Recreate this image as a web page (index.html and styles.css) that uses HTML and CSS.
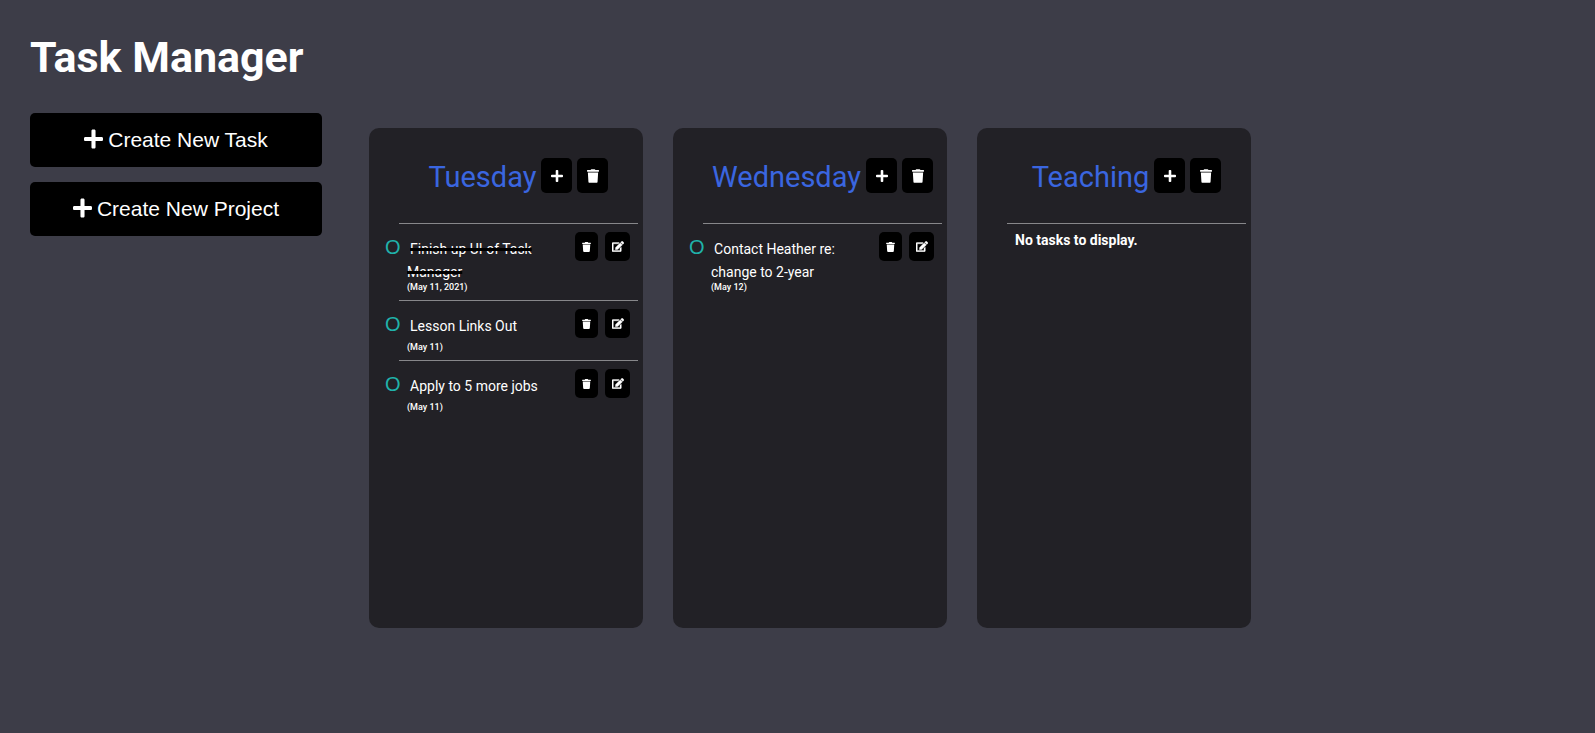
FILE: index.html
```html
<!DOCTYPE html>
<html lang="en">
<head>
<meta charset="utf-8">
<title>Task Manager</title>
<link rel="stylesheet" href="styles.css">
</head>
<body>
<svg class="sprite" aria-hidden="true">
  <symbol id="plus" viewBox="0 0 448 512"><path d="M416 208H272V64c0-17.670-14.330-32-32-32h-32c-17.670 0-32 14.330-32 32v144H32c-17.670 0-32 14.330-32 32v32c0 17.670 14.330 32 32 32h144v144c0 17.670 14.330 32 32 32h32c17.670 0 32-14.330 32-32V304h144c17.670 0 32-14.330 32-32v-32c0-17.670-14.330-32-32-32z"/></symbol>
  <symbol id="trash" viewBox="0 0 448 512"><path d="M432 32H312l-9.400-18.700A24 24 0 0 0 281.100 0H166.800a23.720 23.720 0 0 0-21.400 13.300L136 32H16A16 16 0 0 0 0 48v32a16 16 0 0 0 16 16h416a16 16 0 0 0 16-16V48a16 16 0 0 0-16-16zM53.200 467a48 48 0 0 0 47.900 45h245.800a48 48 0 0 0 47.900-45L416 128H32z"/></symbol>
  <symbol id="edit" viewBox="0 0 576 512"><path d="M402.600 83.200l90.200 90.200c3.800 3.800 3.800 10 0 13.800L274.400 405.600l-92.800 10.300c-12.400 1.400-22.900-9.100-21.500-21.500l10.300-92.800L388.800 83.200c3.800-3.800 10-3.800 13.800 0zm162-22.900l-48.800-48.800c-15.200-15.200-39.900-15.200-55.200 0l-35.400 35.400c-3.800 3.800-3.800 10 0 13.800l90.200 90.200c3.800 3.800 10 3.800 13.800 0l35.400-35.400c15.200-15.300 15.200-40 0-55.200zM384 346.200V448H64V128h229.800c3.200 0 6.200-1.300 8.500-3.500l40-40c7.600-7.600 2.200-20.500-8.500-20.500H48C21.500 64 0 85.500 0 112v352c0 26.500 21.500 48 48 48h352c26.500 0 48-21.500 48-48V306.200c0-10.700-12.900-16-20.500-8.500l-40 40c-2.200 2.300-3.500 5.300-3.500 8.500z"/></symbol>
</svg>
<div class="app">
  <aside class="sidebar">
    <h1 class="app-title">Task Manager</h1>
    <button class="create" type="button"><svg class="icon-lg"><use href="#plus"/></svg>Create New Task</button>
    <button class="create" type="button"><svg class="icon-lg"><use href="#plus"/></svg>Create New Project</button>
  </aside>
  <main class="projects">
    <section class="project">
      <header class="project-header">
        <h2 class="project-title">Tuesday</h2>
        <button class="project-btn" type="button" aria-label="Add task"><svg class="icon"><use href="#plus"/></svg></button>
        <button class="project-btn" type="button" aria-label="Delete project"><svg class="icon"><use href="#trash"/></svg></button>
      </header>
      <ul class="tasks">
        <li class="task">
          <div class="task-body">
            <button class="bullet" type="button">O</button> <span class="done">Finish up UI of Task Manager</span>
            <div class="date">(May 11, 2021)</div>
          </div>
          <button class="task-btn" type="button" aria-label="Delete task"><svg class="icon-sm"><use href="#trash"/></svg></button>
          <button class="task-btn edit" type="button" aria-label="Edit task"><svg class="icon-edit"><use href="#edit"/></svg></button>
        </li>
        <li class="task">
          <div class="task-body">
            <button class="bullet" type="button">O</button> <span>Lesson Links Out</span>
            <div class="date">(May 11)</div>
          </div>
          <button class="task-btn" type="button" aria-label="Delete task"><svg class="icon-sm"><use href="#trash"/></svg></button>
          <button class="task-btn edit" type="button" aria-label="Edit task"><svg class="icon-edit"><use href="#edit"/></svg></button>
        </li>
        <li class="task">
          <div class="task-body">
            <button class="bullet" type="button">O</button> <span>Apply to 5 more jobs</span>
            <div class="date">(May 11)</div>
          </div>
          <button class="task-btn" type="button" aria-label="Delete task"><svg class="icon-sm"><use href="#trash"/></svg></button>
          <button class="task-btn edit" type="button" aria-label="Edit task"><svg class="icon-edit"><use href="#edit"/></svg></button>
        </li>
      </ul>
    </section>
    <section class="project">
      <header class="project-header">
        <h2 class="project-title">Wednesday</h2>
        <button class="project-btn" type="button" aria-label="Add task"><svg class="icon"><use href="#plus"/></svg></button>
        <button class="project-btn" type="button" aria-label="Delete project"><svg class="icon"><use href="#trash"/></svg></button>
      </header>
      <ul class="tasks">
        <li class="task">
          <div class="task-body">
            <button class="bullet" type="button">O</button> <span>Contact Heather re: change to 2-year</span>
            <div class="date">(May 12)</div>
          </div>
          <button class="task-btn" type="button" aria-label="Delete task"><svg class="icon-sm"><use href="#trash"/></svg></button>
          <button class="task-btn edit" type="button" aria-label="Edit task"><svg class="icon-edit"><use href="#edit"/></svg></button>
        </li>
      </ul>
    </section>
    <section class="project">
      <header class="project-header">
        <h2 class="project-title">Teaching</h2>
        <button class="project-btn" type="button" aria-label="Add task"><svg class="icon"><use href="#plus"/></svg></button>
        <button class="project-btn" type="button" aria-label="Delete project"><svg class="icon"><use href="#trash"/></svg></button>
      </header>
      <ul class="tasks">
        <li class="task empty">No tasks to display.</li>
      </ul>
    </section>
  </main>
</div>
</body>
</html>
```

FILE: styles.css
```css
* { box-sizing: border-box; }

body {
  margin: 0;
  background: #3d3d48;
  color: #fff;
  font: 14px/17px Roboto, sans-serif;
}

.sprite { display: none; }

svg { fill: currentColor; }

button {
  border: 0;
  padding: 0;
  background: #000;
  color: #fff;
  border-radius: 5px;
  cursor: pointer;
}

.app {
  display: flex;
  gap: 47px;
  padding: 30px;
}

.sidebar {
  display: flex;
  flex-direction: column;
  gap: 15px;
  flex: 0 0 292px;
}

.app-title {
  margin: 0 0 13px;
  font-size: 43px;
  line-height: 55px;
  font-weight: 700;
}

.create {
  display: flex;
  align-items: center;
  justify-content: center;
  gap: 5px;
  height: 54px;
  font: 21px "Liberation Sans", Arial, sans-serif;
}

.icon-lg { width: 19px; height: 22px; margin-bottom: 2px; }
.icon { width: 12px; height: 14px; }
.icon-sm { width: 9px; height: 10px; }
.icon-edit {
  width: 12px;
  height: 11px;
  stroke: currentColor;
  stroke-width: 16px;
}

.projects {
  display: flex;
  flex-wrap: wrap;
  gap: 30px;
  padding-top: 98px;
}

.project {
  width: 274px;
  min-height: 500px;
  padding: 0 5px 0 30px;
  border-radius: 10px;
  background: #222126;
}

.project-header {
  display: flex;
  align-items: center;
  justify-content: center;
  gap: 5px;
  height: 95px;
}

.project-title {
  margin: 0;
  color: #3a66e0;
  font-size: 29px;
  line-height: 34px;
  padding-top: 2px;
  font-weight: 400;
}

.project-btn {
  display: grid;
  place-items: center;
  width: 31px;
  height: 35px;
}

.tasks {
  margin: 0;
  padding: 0;
  list-style: none;
}

.task {
  display: flex;
  align-items: flex-start;
  gap: 7px;
  padding: 8px 8px 7px;
  border-top: 1px solid #87878a;
}

.task-body { flex: 1; }

.bullet {
  margin: 0 6px 0 -22px;
  padding: 4px 0 5px;
  background: none;
  color: lightseagreen;
  font: 20px/23px "Liberation Sans", Arial, sans-serif;
}

.done {
  text-decoration: line-through #000 3px;
}

.date {
  padding-top: 1px;
  font-size: 9px;
  line-height: 11px;
  font-weight: 500;
}

.task-btn {
  display: grid;
  place-items: center;
  width: 23px;
  height: 29px;
}

.task-btn.edit { width: 25px; }

.empty { font-weight: 700; }
```
